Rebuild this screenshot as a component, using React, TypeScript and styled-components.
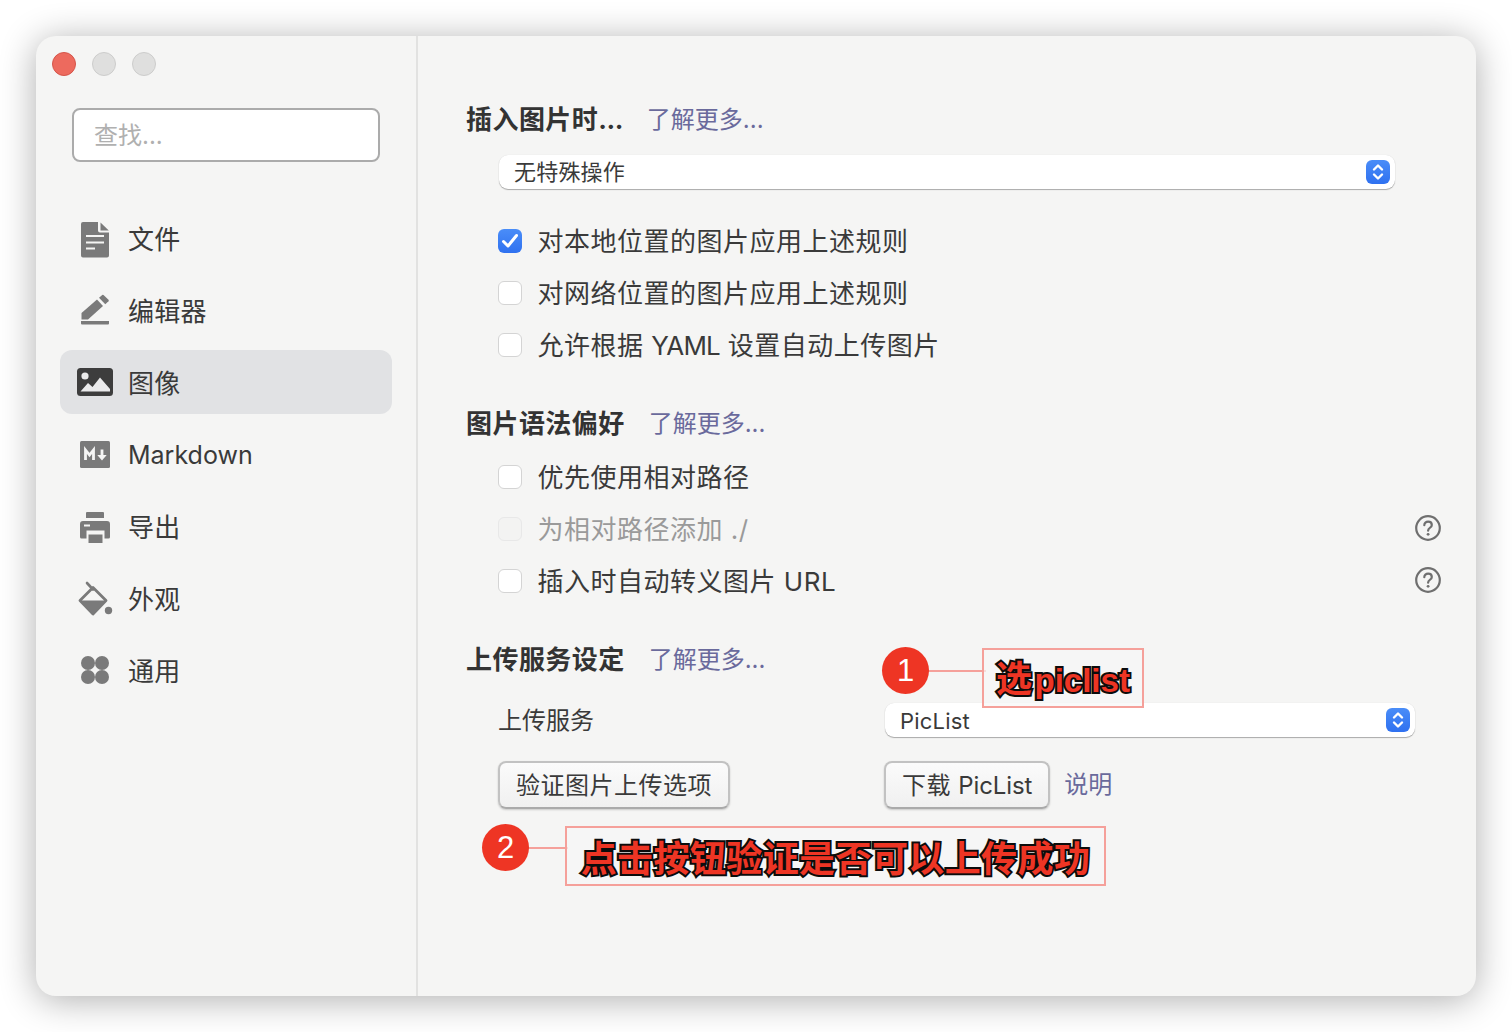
import React from 'react';
import styled, { createGlobalStyle } from 'styled-components';

const Global = createGlobalStyle`
  html, body { margin: 0; padding: 0; background: #fff; }
  body { font-family: Inter, "Noto Sans CJK SC", sans-serif; color: #3a3a3a; }
`;

const Page = styled.div`
  width: 1512px; height: 1032px; padding: 36px; box-sizing: border-box; overflow: hidden; background: #fff;
`;
const Win = styled.div`
  position: relative; display: flex; width: 1440px; height: 960px; border-radius: 20px; background: #f5f5f4;
  box-shadow: 0 4px 36px rgba(0,0,0,.32);
`;
const Sidebar = styled.aside`
  width: 382px; box-sizing: border-box; flex: none; border-right: 2px solid #e2e2e1;
  padding: 16px 24px 0 16px; display: flex; flex-direction: column;
`;
const Lights = styled.div`display: flex; gap: 16px;`;
const Light = styled.span<{ $red?: boolean }>`
  width: 24px; height: 24px; box-sizing: border-box; border-radius: 50%;
  background: ${p => p.$red ? '#ed6a5e' : '#dfdfde'};
  border: 1px solid ${p => p.$red ? '#d5554a' : '#cdcdcc'};
`;
const Search = styled.div`
  margin: 32px 12px 0 20px; height: 54px; box-sizing: border-box; border: 2px solid #ababab; border-radius: 8px;
  background: #fff; color: #b0b0b0; font-size: 24px; padding-left: 20px; display: flex; align-items: center;
`;
const SearchText = styled.span`margin-bottom: 4px;`;
const Nav = styled.nav`margin: 44px 0 0 8px; display: flex; flex-direction: column; gap: 8px;`;
const NavItem = styled.div<{ $on?: boolean }>`
  height: 64px; display: flex; align-items: center; border-radius: 12px; padding-left: 18px; gap: 16px;
  background: ${p => p.$on ? '#e1e2e4' : 'transparent'};
  font-size: 26px; color: #3a3a3a;
`;
const NavLabel = styled.span<{ $latin?: boolean }>`
  margin-bottom: ${p => p.$latin ? '-2px' : '2px'};
  font-size: ${p => p.$latin ? '25px' : '26px'};
  letter-spacing: ${p => p.$latin ? '0' : '.2px'};
`;
const IconBox = styled.svg<{ $wide?: boolean }>`
  width: ${p => p.$wide ? 36 : 34}px; height: 34px; flex: none; display: block; overflow: visible;
  margin: 0 ${p => p.$wide ? -1 : 0}px;
`;

const Main = styled.main`
  flex: 1; box-sizing: border-box; padding: 65px 34px 0 48px; display: flex; flex-direction: column; font-size: 26px;
`;
const Head = styled.div<{ $top?: number }>`
  height: 36px; display: flex; align-items: center; gap: 24px; margin-top: ${p => p.$top ?? 0}px;
`;
const HeadTitle = styled.span`font-weight: 700; font-size: 26px; color: #333; letter-spacing: .45px; margin-bottom: 4px;`;
const Dots = styled.span`letter-spacing: -.5px;`;
const Link = styled.span`color: #6a6a9c; font-size: 24px; margin-bottom: 4px;`;
const Select = styled.div<{ $w: number }>`
  width: ${p => p.$w}px; height: 34px; box-sizing: border-box; flex: none; display: flex; align-items: center;
  justify-content: space-between; background: #fff; border-radius: 9px; padding: 0 5px 0 15px;
  font-size: 22px; color: #3a3a3a; letter-spacing: .2px;
  box-shadow: 0 1px 1px rgba(0,0,0,.3), 0 0 1px rgba(0,0,0,.12);
`;
const SelectText = styled.span<{ $latin?: boolean }>`margin-bottom: ${p => p.$latin ? '-2px' : '4px'};`;
const Stepper = styled.span`
  width: 24px; height: 24px; border-radius: 6px; background: linear-gradient(#4a8df8, #2f71f0);
  display: flex; align-items: center; justify-content: center;
`;
const FirstSelect = styled.div`margin: 18px 0 0 33px;`;
const Rows = styled.div<{ $top: number }>`margin-top: ${p => p.$top}px; padding-left: 32px; display: flex; flex-direction: column;`;
const Row = styled.label<{ $dim?: boolean }>`
  height: 52px; display: flex; align-items: center; gap: 15.5px; letter-spacing: .5px;
  color: ${p => p.$dim ? '#9a9a9a' : '#3a3a3a'};
`;
const RowText = styled.span`margin-bottom: 4px;`;
const Tight = styled.span`letter-spacing: -.8px;`;
const Check = styled.span<{ $on?: boolean; $dim?: boolean }>`
  width: 24px; height: 24px; box-sizing: border-box; border-radius: 6px; flex: none; display: flex;
  align-items: center; justify-content: center;
  background: ${p => p.$on ? 'linear-gradient(#4a8df8, #2f71f0)' : p.$dim ? '#f3f3f2' : '#fff'};
  border: ${p => p.$on ? 'none' : `1px solid ${p.$dim ? '#e8e8e8' : '#d4d4d4'}`};
`;
const Help = styled.svg`width: 28px; height: 28px; margin: 0 0 2px auto; flex: none;`;
const Upload = styled.div`
  margin-top: 26px; display: grid; grid-template-columns: 386px 530px; grid-row-gap: 24px; padding-left: 32px;
`;
const UploadLabel = styled.div`height: 34px; font-size: 24px; display: flex; align-items: center;`;
const UploadLabelText = styled.span`margin-bottom: 4px;`;
const SelectCell = styled.div`margin-left: 1px;`;
const BtnCell = styled.div<{ $shift?: number }>`
  display: flex; align-items: center; gap: 14px; margin-top: ${p => p.$shift ?? 0}px;
`;
const Btn = styled.div`
  height: 48px; box-sizing: border-box; padding: 0 16px; display: flex; align-items: center; font-size: 24px;
  letter-spacing: .5px; color: #3a3a3a; border-radius: 8px; border: 2px solid #c2c2c2; border-bottom-color: #aaa;
  background: linear-gradient(#fbfbfb, #f0f0f0); box-shadow: 0 1px 2px rgba(0,0,0,.18);
`;
const BtnText = styled.span`margin-bottom: 3px;`;
const BtnLatin = styled.span`letter-spacing: -.1px;`;

const Badge = styled.div<{ $x: number; $y: number }>`
  position: absolute; left: ${p => p.$x}px; top: ${p => p.$y}px; width: 47px; height: 47px; border-radius: 50%;
  background: #ee3524; color: #fff; font-size: 31px; font-family: "Liberation Sans", sans-serif;
  display: flex; align-items: center; justify-content: center;
`;
const Line = styled.div<{ $x: number; $y: number; $w: number }>`
  position: absolute; left: ${p => p.$x}px; top: ${p => p.$y}px; width: ${p => p.$w}px; height: 2px; background: #f5a09a;
`;
const Note = styled.div<{ $x: number; $y: number; $w: number; $h: number }>`
  position: absolute; left: ${p => p.$x}px; top: ${p => p.$y}px; width: ${p => p.$w}px; height: ${p => p.$h}px;
  box-sizing: border-box; border: 2px solid #f5a09a; display: flex; align-items: center; justify-content: center;
  white-space: nowrap; background: rgba(247,247,246,.7);
`;
const NoteText = styled.span<{ $drop: number }>`
  font-family: "Liberation Sans", "Noto Sans CJK SC", sans-serif; font-weight: 700; font-size: 36px; line-height: 1;
  color: #ee3524; -webkit-text-stroke: 4px #0c0c0c; paint-order: stroke fill; letter-spacing: .4px;
  margin-top: ${p => p.$drop}px;
`;
const NoteLatin = styled.span`font-size: 33px; margin-left: 2px; letter-spacing: 0;`;

const Chevrons = () => (
  <svg width="14" height="18" viewBox="0 0 14 18" fill="none" stroke="#fff" strokeWidth="2.4" strokeLinecap="round" strokeLinejoin="round">
    <path d="M3 6.5 7 2.5l4 4M3 11.5l4 4 4-4" />
  </svg>
);
const Tick = () => (
  <svg width="18" height="16" viewBox="0 0 18 16" fill="none" stroke="#fff" strokeWidth="3" strokeLinecap="round" strokeLinejoin="round">
    <path d="M2.5 8.5 7 13l8.5-10.5" />
  </svg>
);
const Q = () => (
  <Help viewBox="0 0 28 28" fill="none" stroke="#6f6f6f">
    <circle cx="14" cy="14" r="11.8" strokeWidth="2.2" />
    <path d="M10.3 11.2c0-2.2 1.7-3.6 3.8-3.6s3.7 1.3 3.7 3.3c0 2.8-3.7 2.9-3.7 5.8" strokeWidth="2.2" strokeLinecap="round" />
    <circle cx="14.1" cy="20.3" r="1.4" fill="#6f6f6f" stroke="none" />
  </Help>
);
const G = '#7a7a7a';
const L = '#f5f5f4';
const Icons: Record<string, React.ReactNode> = {
  file: (
    <IconBox viewBox="0 0 34 34">
      <path fill={G} d="M5 1h15v8.500a2 2 0 0 0 2 2h9V34.500a2 2 0 0 1-2 2H5a2 2 0 0 1-2-2V3a2 2 0 0 1 2-2Z" />
      <path fill={G} d="M22.500 1.500 30.800 9.500h-8.300Z" />
      <path stroke={L} strokeWidth="1.800" d="M8 15h18M8 21.500h18M8 27.500h9" />
    </IconBox>
  ),
  pen: (
    <IconBox viewBox="0 0 34 34">
      <path fill={G} d="M3 28h28v2.500a1 1 0 0 1-1 1H4a1 1 0 0 1-1-1Z" />
      <path fill={G} d="M3.500 26.500v-6.500L19 6.500 25 13 10 26.500Z" />
      <path fill={G} d="m21 4.800 3.200-2.800a1 1 0 0 1 1.300 0l5 4.800a1 1 0 0 1 0 1.400L27.300 11.300Z" />
    </IconBox>
  ),
  image: (
    <IconBox $wide viewBox="0 0 36 34">
      <rect x="0" y="3" width="36" height="28" rx="3.500" fill="#3d3d3d" />
      <circle cx="8" cy="11" r="3.600" fill="#eaeaeb" />
      <path fill="#eaeaeb" d="M3.500 26.500 11 18l4.500 4 7.500-9.500 10 11.500v2.500Z" />
    </IconBox>
  ),
  md: (
    <IconBox viewBox="0 0 34 34">
      <rect x="2" y="4" width="30" height="27" rx="1.500" fill={G} />
      <path fill="none" stroke={L} strokeWidth="2.800" d="M7.500 23V13l4 5 4-5v10" />
      <path fill="none" stroke={L} strokeWidth="2.800" d="M24 12.500V19" />
      <path fill={L} d="m19.300 18 9.400 0-4.700 5.500Z" />
    </IconBox>
  ),
  print: (
    <IconBox viewBox="0 0 34 34">
      <path fill={G} d="M9 3h16a1 1 0 0 1 1 1v5H8V4a1 1 0 0 1 1-1Z" />
      <path fill={G} fillRule="evenodd" d="M5 12h24a3 3 0 0 1 3 3v13a1.500 1.500 0 0 1-1.500 1.500H3.500A1.500 1.500 0 0 1 2 28V15a3 3 0 0 1 3-3Zm1 3.500v2h6v-2Z" />
      <path fill={L} d="M8.500 21.500h18v12.500h-18Z" />
      <path fill={G} d="M10.500 25.500h14v8.500h-14Z" />
    </IconBox>
  ),
  bucket: (
    <IconBox $wide viewBox="0 0 36 34">
      <path fill="none" stroke={G} strokeWidth="2.600" strokeLinecap="round" d="M10 2l6 6.500" />
      <path fill="none" stroke={G} strokeWidth="2.800" strokeLinejoin="round" d="M16 6.500 29 19.500 16 33 3 19.500Z" />
      <path fill={G} d="M3 19.500h26L16 33Z" />
      <circle cx="31.500" cy="29.500" r="3.700" fill={G} />
    </IconBox>
  ),
  dots: (
    <IconBox viewBox="0 0 34 34">
      <circle cx="10" cy="10" r="7" fill={G} />
      <circle cx="24" cy="10" r="7" fill={G} />
      <circle cx="10" cy="24" r="7" fill={G} />
      <circle cx="24" cy="24" r="7" fill={G} />
    </IconBox>
  ),
};

const navItems = [
  ['file', '文件'], ['pen', '编辑器'], ['image', '图像'], ['md', 'Markdown'], ['print', '导出'], ['bucket', '外观'], ['dots', '通用'],
];

export default function App() {
  return (
    <Page>
      <Global />
      <Win>
        <Sidebar>
          <Lights><Light $red /><Light /><Light /></Lights>
          <Search><SearchText>查找...</SearchText></Search>
          <Nav>
            {navItems.map(([k, t]) => (
              <NavItem key={k} $on={k === 'image'}>{Icons[k]}<NavLabel $latin={k === 'md'}>{t}</NavLabel></NavItem>
            ))}
          </Nav>
        </Sidebar>
        <Main>
          <Head><HeadTitle>插入图片时<Dots>...</Dots></HeadTitle><Link>了解更多...</Link></Head>
          <FirstSelect>
            <Select $w={896}><SelectText>无特殊操作</SelectText><Stepper><Chevrons /></Stepper></Select>
          </FirstSelect>
          <Rows $top={26}>
            <Row><Check $on><Tick /></Check><RowText>对本地位置的图片应用上述规则</RowText></Row>
            <Row><Check /><RowText>对网络位置的图片应用上述规则</RowText></Row>
            <Row><Check /><RowText>允许根据 <Tight>YAML</Tight> 设置自动上传图片</RowText></Row>
          </Rows>
          <Head $top={34}><HeadTitle>图片语法偏好</HeadTitle><Link>了解更多...</Link></Head>
          <Rows $top={10}>
            <Row><Check /><RowText>优先使用相对路径</RowText></Row>
            <Row $dim><Check $dim /><RowText>为相对路径添加 ./</RowText><Q /></Row>
            <Row><Check /><RowText>插入时自动转义图片 URL</RowText><Q /></Row>
          </Rows>
          <Head $top={34}><HeadTitle>上传服务设定</HeadTitle><Link>了解更多...</Link></Head>
          <Upload>
            <UploadLabel><UploadLabelText>上传服务</UploadLabelText></UploadLabel>
            <SelectCell><Select $w={530}><SelectText $latin>PicList</SelectText><Stepper><Chevrons /></Stepper></Select></SelectCell>
            <BtnCell><Btn><BtnText>验证图片上传选项</BtnText></Btn></BtnCell>
            <BtnCell $shift={-1}><Btn><BtnText>下载 <BtnLatin>PicList</BtnLatin></BtnText></Btn><Link>说明</Link></BtnCell>
          </Upload>
        </Main>
        <Line $x={880} $y={634} $w={70} />
        <Badge $x={846} $y={611}>1</Badge>
        <Note $x={946} $y={612} $w={162} $h={60}><NoteText $drop={3}>选<NoteLatin>piclist</NoteLatin></NoteText></Note>
        <Line $x={480} $y={811} $w={52} />
        <Badge $x={446} $y={788}>2</Badge>
        <Note $x={529} $y={790} $w={541} $h={60}><NoteText $drop={7}>点击按钮验证是否可以上传成功</NoteText></Note>
      </Win>
    </Page>
  );
}
